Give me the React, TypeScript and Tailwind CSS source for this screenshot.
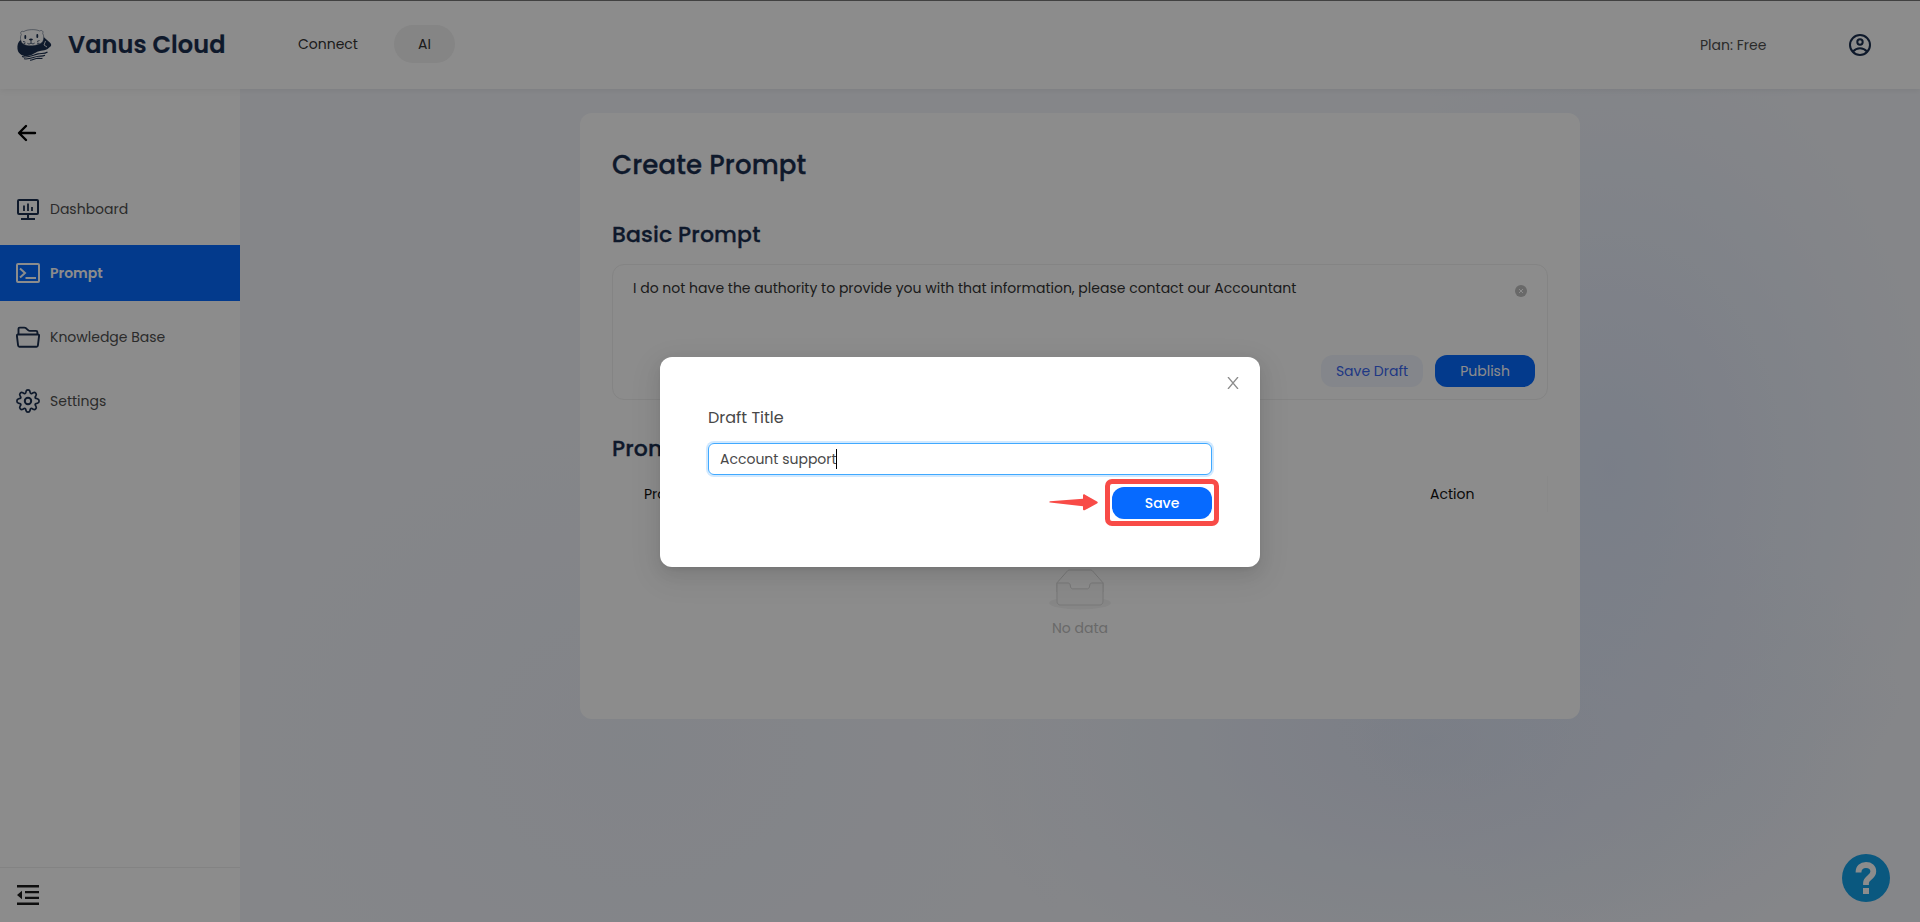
import type { ReactNode } from "react";

function OtterLogo() {
  return (
    <svg width="35" height="32" viewBox="0 0 35 32" fill="none">
      <path d="M3.500 11C1 13 0 16 .5 20c.5 4.500 4.500 7.300 9.500 7 5.500-.3 8.500-4.500 14-5.300 2-.3 4.500-.2 6.500-1.700l3.500-3c.6-1.500-.3-3-2-4.200L25.500 7 20 13H8Z" fill="#1b2f4f" />
      <path d="M4.600 13.500C3 10.500 3.200 7.500 4.300 5.500 2.800 3.200 4.500 1.600 6.800 2.600 10 .2 19 0 22.700 2c2-1.300 4 .2 3 2.300 1.300 2.500 1.500 5.500.2 8-2.600 5-17.800 6.500-21.300 1.200Z" fill="#fff" stroke="#1b2f4f" strokeWidth=".6" strokeOpacity=".75" />
      <path d="M8.300 7v2M20.300 6v2" stroke="#1b2f4f" strokeWidth="1.800" strokeLinecap="round" />
      <path d="M11.800 10.200c1.200-1 3.200-1.100 4.200 0-.6 1.500-3.200 1.700-4.200 0Z" fill="#1b2f4f" />
      <path d="M14 11v3m0 0c-1 1.200-2.600 1.200-3.600.3M14 14c1 1.100 2.600 1.100 3.600.1M6 12.500l2.200.5M6.500 14.800l2-.8M20 12.500l2.500-1M20 14.200l2.500.2" stroke="#1b2f4f" strokeWidth=".8" />
      <path d="M5 27.500c6 2 11-1.500 16-2.600 3.500-.8 6.500.3 9.500-1.900M7 29.800c6 1 10-2.300 14.500-2.600 3-.2 4.500.2 6.500-1M13 31.300c3-.3 5-1.800 8-2 1.500 0 3 .4 4.500 0" stroke="#1b2f4f" strokeWidth="1.100" />
      <path d="M28.500 12l-1.500 4 3 2" stroke="#fff" strokeWidth=".8" />
    </svg>
  );
}

const iconProps = { width: 24, height: 24, viewBox: "0 0 24 24", fill: "none" };

function DashboardIcon() {
  return (
    <svg {...iconProps} stroke="#1b2f4f" strokeWidth="2">
      <rect x="2" y="3" width="20" height="14" rx="1" />
      <path d="M12 17v4M5 22h14" />
      <path d="M8 8.500V14M12 6.500V14M16 10v4" strokeWidth="1.800" />
    </svg>
  );
}

function PromptIcon() {
  return (
    <svg {...iconProps} stroke="#fff" strokeWidth="2">
      <rect x="1" y="3" width="22" height="18" rx="1" />
      <path d="m4 7.500 5 4.500-5 4.500M9.500 17H20" />
    </svg>
  );
}

function FolderIcon() {
  return (
    <svg {...iconProps} stroke="#1b2f4f" strokeWidth="1.900" strokeLinejoin="round">
      <path d="M2.500 9.500V3.800c0-.8.400-1.200 1.100-1.200h4.700c.6 0 1 .1 1.500.5l2.600 2.300c.4.400.8.500 1.400.5H20c.9 0 1.400.5 1.400 1.300v2.300" />
      <path d="M2 9.500h20c.8 0 1.200.5 1.100 1.200l-1.200 9.800c-.1.800-.6 1.200-1.300 1.200H3.400c-.8 0-1.200-.4-1.300-1.200L.9 10.700c-.1-.7.300-1.200 1.100-1.200Z" />
    </svg>
  );
}

function GearIcon() {
  return (
    <svg {...iconProps} stroke="#1b2f4f" strokeWidth="1.700" strokeLinejoin="round">
      <path d="M12 .9c1 0 1.800.6 2 1.600l.3 1.300c.2.700.9 1 1.600.7l1.300-.7c.9-.5 1.800-.4 2.500.3s.8 1.600.3 2.500l-.7 1.200c-.4.700 0 1.400.7 1.600l1.500.4c1 .2 1.600 1.200 1.600 2.200s-.6 2-1.600 2.200l-1.500.4c-.7.200-1.100.9-.7 1.600l.7 1.200c.5.900.4 1.800-.3 2.500s-1.600.8-2.500.3l-1.300-.7c-.7-.3-1.400 0-1.600.7l-.3 1.300c-.2 1-1 1.600-2 1.600s-1.800-.6-2-1.600l-.3-1.300c-.2-.7-.9-1-1.600-.7l-1.300.7c-.9.500-1.800.4-2.500-.3s-.8-1.600-.3-2.500l.7-1.200c.4-.7 0-1.400-.7-1.600l-1.500-.4c-1-.2-1.600-1.200-1.600-2.200s.6-2 1.600-2.200L4 9.400c.7-.2 1.100-.9.700-1.600L4 6.600c-.5-.9-.4-1.800.3-2.500s1.600-.8 2.500-.3l1.300.7c.7.300 1.400 0 1.600-.7l.3-1.300c.2-1 1-1.600 2-1.600Z" />
      <circle cx="12" cy="12" r="3.200" strokeWidth="2" />
    </svg>
  );
}

function EmptyIcon() {
  return (
    <svg width="64" height="41" viewBox="0 0 64 41">
      <g transform="translate(0 1)" fill="none">
        <ellipse fill="#f5f5f5" cx="32" cy="33" rx="31" ry="6.500" />
        <g stroke="#d9d9d9">
          <path d="M55 12.760 44.854 1.258C44.367.474 43.656 0 42.907 0H21.093c-.749 0-1.460.474-1.947 1.257L9 12.761V22h46v-9.240Z" />
          <path d="M41.613 15.931c0-1.605.994-2.930 2.227-2.931H55v18.137C55 33.260 53.680 35 52.050 35h-40.100C10.320 35 9 33.259 9 31.137V13h11.160c1.233 0 2.227 1.323 2.227 2.928v.022c0 1.605 1.005 2.901 2.237 2.901h14.752c1.232 0 2.237-1.308 2.237-2.913v-.007Z" fill="#fafafa" />
        </g>
      </g>
    </svg>
  );
}

function NavItem({ icon, children, active }: { icon: ReactNode; children: ReactNode; active?: boolean }) {
  return (
    <div className={active ? "flex h-14 items-center gap-[10px] bg-[#066aff] pl-4 text-white" : "flex h-14 items-center gap-[10px] pl-4 text-[#4f4f4f]"}>
      {icon}
      {children}
    </div>
  );
}

function Header() {
  return (
    <header className="z-10 flex h-[89px] shrink-0 items-center border-t border-[#777] bg-white shadow-[0_2px_6px_rgba(0,0,0,0.06)]">
      <div className="flex w-[226px] items-center gap-4 pl-[17px]">
        <OtterLogo />
        <span className="text-2xl font-semibold tracking-[0.1px] whitespace-nowrap text-[#1b2f4f] [-webkit-text-stroke:0.2px_#1b2f4f]">Vanus Cloud</span>
      </div>
      <nav className="flex items-center gap-9 pb-[2px] pl-[72px] text-sm text-[#333]">
        <span className="w-[60px] whitespace-nowrap">Connect</span>
        <span className="flex h-[38px] w-[61px] items-center justify-center rounded-full bg-[#f2f2f2]">AI</span>
      </nav>
      <div className="ml-auto flex items-center gap-[81px] pr-[48px]">
        <span className="w-[67px] text-sm whitespace-nowrap text-[#4f4f4f]">Plan: Free</span>
        <svg {...iconProps} stroke="#1b2f4f" strokeWidth="2">
          <circle cx="12" cy="12" r="10" />
          <circle cx="12" cy="9" r="2.700" />
          <path d="M5 18.500c1.800-2 4.300-3.200 7-3.200s5.200 1.200 7 3.200" />
        </svg>
      </div>
    </header>
  );
}

function Sidebar() {
  return (
    <aside className="flex w-60 shrink-0 flex-col bg-white text-sm shadow-[2px_0_6px_rgba(20,60,120,0.08)]">
      <div className="flex h-[92px] items-center pl-[17px] pb-[4px]">
        <svg width="20" height="18" viewBox="0 0 20 18" fill="none" stroke="#000" strokeWidth="2.400" strokeLinecap="round" strokeLinejoin="round">
          <path d="M9 2 2 9l7 7M2.500 9H18" />
        </svg>
      </div>
      <nav className="flex flex-col gap-2">
        <NavItem icon={<DashboardIcon />}>Dashboard</NavItem>
        <NavItem icon={<PromptIcon />} active>
          <b className="font-semibold">Prompt</b>
        </NavItem>
        <NavItem icon={<FolderIcon />}>Knowledge Base</NavItem>
        <NavItem icon={<GearIcon />}>Settings</NavItem>
      </nav>
      <div className="mt-auto flex h-[55px] items-center border-t border-[#eee] pl-[17px]">
        <svg width="22" height="20" viewBox="0 0 22 20" fill="#1a1a1a">
          <path d="M0 0h22v2.400H0zM8 6h14v2.200H8zM8 11.800h14V14H8zM0 17.600h22V20H0zM0 10l5-4.200v8.400z" />
        </svg>
      </div>
    </aside>
  );
}

function PromptCard() {
  return (
    <section className="flex h-[606px] w-[1000px] flex-col rounded-xl bg-white px-8 text-sm">
      <h1 className="mt-[34px] text-[26px] leading-9 font-medium tracking-[0.14px] text-[#1b2f4f] [-webkit-text-stroke:0.3px_#1b2f4f]">Create Prompt</h1>
      <h2 className="mt-[34px] text-[22px] leading-9 font-medium tracking-[0.14px] text-[#1b2f4f] [-webkit-text-stroke:0.3px_#1b2f4f]">Basic Prompt</h2>
      <div className="mt-[11px] flex h-[136px] flex-col justify-between rounded-xl border border-[#f0f0f0] pt-3 pr-3 pb-3 pl-5">
        <div className="flex items-start justify-between pr-[8px]">
          <p className="leading-[22px] whitespace-nowrap text-[#333]">
            I do not have the authority to provide you with that information, please contact our Accountant
          </p>
          <svg className="mt-2" width="12" height="12" viewBox="0 0 12 12">
            <circle cx="6" cy="6" r="6" fill="#bfbfbf" />
            <path d="m4 4 4 4m0-4L4 8" stroke="#fff" />
          </svg>
        </div>
        <div className="flex justify-end gap-3">
          <span className="flex h-8 w-[102px] items-center justify-center rounded-xl bg-[#f0f5fd] whitespace-nowrap text-[#3a66f0]">Save Draft</span>
          <span className="flex h-8 w-[100px] items-center justify-center rounded-xl bg-[#066aff] text-white">Publish</span>
        </div>
      </div>
      <h2 className="mt-[31px] text-[22px] leading-9 font-medium tracking-[0.14px] text-[#1b2f4f] [-webkit-text-stroke:0.3px_#1b2f4f]">Prompt</h2>
      <div className="mt-[9px] flex h-[36px] items-center border-r border-[#fafafa] pl-8 text-[#111]">
        <span className="w-[786px]">Prompt Title</span>
        <span>Action</span>
      </div>
      <div className="mt-[57px] flex flex-col items-center gap-[7px] text-[#bfbfbf]">
        <EmptyIcon />
        <span className="leading-[22px]">No data</span>
      </div>
    </section>
  );
}

function DraftModal() {
  return (
    <div className="flex h-[210px] w-[600px] flex-col rounded-xl bg-white px-12 text-[#484848] shadow-[0_6px_16px_rgba(0,0,0,0.08),0_3px_6px_-4px_rgba(0,0,0,0.12),0_9px_28px_8px_rgba(0,0,0,0.05)]">
      <div className="-mr-[27px] flex h-[49px] items-end justify-end">
        <svg className="mb-[17px]" width="12" height="12" viewBox="0 0 12 12" stroke="#8c8c8c" strokeWidth="1.300">
          <path d="M1 0l10 12M11 0 1 12" />
        </svg>
      </div>
      <label className="text-base leading-6">Draft Title</label>
      <div className="mt-[13px] flex h-8 shrink-0 items-center rounded-md border border-[#40a9ff] px-[11px] text-sm shadow-[0_0_0_2px_rgba(24,144,255,0.2)]">
        <span className="w-[116px] whitespace-nowrap">Account support</span>
        <span className="h-5 w-px bg-black" />
      </div>
      <div className="-mr-[7px] mt-[4px] flex items-start justify-end gap-[6px]">
        <svg className="mt-[15px]" width="50" height="17" viewBox="0 0 50 17" fill="#f84b47">
          <path d="M1 7.300 34 4.800V1.500c0-1 1-1.500 2-.8l12 6.700c1 .6 1 1.400 0 2l-12 6.700c-1 .6-2 .1-2-.9v-3L1 8.500c-.8-.1-.8-1.100 0-1.200Z" />
        </svg>
        <div className="flex h-[47px] w-[114px] items-center justify-center rounded-[7px] border-[5px] border-[#f84b47]">
          <span className="flex h-8 w-[100px] items-center justify-center rounded-xl bg-[#066aff] text-sm font-medium text-white">Save</span>
        </div>
      </div>
    </div>
  );
}

export default function App() {
  return (
    <div className="relative flex h-[922px] w-full flex-col overflow-hidden font-['Poppins','Inter',sans-serif]">
      <Header />
      <div className="flex min-h-0 flex-1">
        <Sidebar />
        <main className="flex flex-1 flex-col bg-[#f3f5fa] bg-[radial-gradient(ellipse_340px_460px_at_1370px_380px,rgba(214,225,247,0.75),rgba(220,229,247,0.45)_50%,transparent),radial-gradient(ellipse_480px_280px_at_1190px_650px,rgba(214,222,242,0.65),rgba(220,228,244,0.4)_50%,transparent),radial-gradient(ellipse_460px_380px_at_400px_660px,rgba(232,237,247,0.6),transparent)] pt-6 pl-[340px]">
          <PromptCard />
        </main>
      </div>
      <div className="absolute right-[30px] bottom-5 z-20 flex h-12 w-12 items-center justify-center rounded-full bg-[#13a0e8] text-white">
        <svg width="22" height="34" viewBox="0 0 22 34" fill="none">
          <path d="M3.500 11.500c0-4.800 3-7.500 7.500-7.500s7.300 2.500 7.300 6.500c0 5.800-7.300 6-7.300 11.500v2" stroke="#fff" strokeWidth="5.800" />
          <path d="M8 27h6v6H8z" fill="#fff" />
        </svg>
      </div>
      <div className="absolute inset-0 z-30 flex justify-center bg-black/45 pt-[357px]">
        <DraftModal />
      </div>
    </div>
  );
}
